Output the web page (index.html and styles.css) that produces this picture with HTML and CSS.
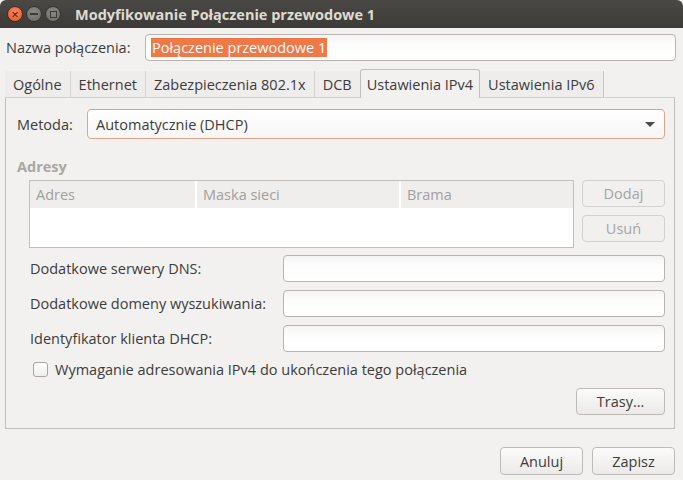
FILE: index.html
```html
<!DOCTYPE html>
<html lang="pl">
<head>
  <meta charset="UTF-8">
  <meta name="viewport" content="width=device-width, initial-scale=1.0">
  <title>Modyfikowanie Połączenie przewodowe 1</title>
  <link rel="stylesheet" href="styles.css">
</head>
<body>
  <div class="window">
    <div class="titlebar">
      <span class="wbtn close">&#215;</span>
      <span class="wbtn min"><i class="bar"></i></span>
      <span class="wbtn max"><i class="box"></i></span>
      <span class="title">Modyfikowanie Połączenie przewodowe 1</span>
    </div>

    <div class="name-row">
      <label>Nazwa połączenia:</label>
      <div class="entry name-entry"><span class="selected">Połączenie przewodowe 1</span></div>
    </div>

    <div class="tabs">
      <div class="tab">Ogólne</div>
      <div class="tab">Ethernet</div>
      <div class="tab">Zabezpieczenia 802.1x</div>
      <div class="tab">DCB</div>
      <div class="tab active">Ustawienia IPv4</div>
      <div class="tab last">Ustawienia IPv6</div>
    </div>

    <div class="page">
      <div class="method-row">
        <label>Metoda:</label>
        <div class="combo">
          <span>Automatycznie (DHCP)</span>
          <span class="arrow"></span>
        </div>
      </div>

      <div class="section-title">Adresy</div>
      <div class="addr-row">
        <div class="tree">
          <div class="tree-head">
            <div class="col c1">Adres</div>
            <div class="col c2">Maska sieci</div>
            <div class="col c3">Brama</div>
          </div>
        </div>
        <div class="side-buttons">
          <button class="btn disabled">Dodaj</button>
          <button class="btn disabled">Usuń</button>
        </div>
      </div>

      <div class="form">
        <div class="form-row">
          <label>Dodatkowe serwery DNS:</label>
          <div class="entry"></div>
        </div>
        <div class="form-row">
          <label>Dodatkowe domeny wyszukiwania:</label>
          <div class="entry"></div>
        </div>
        <div class="form-row">
          <label>Identyfikator klienta DHCP:</label>
          <div class="entry"></div>
        </div>
      </div>

      <div class="check-row">
        <span class="checkbox"></span>
        <span>Wymaganie adresowania IPv4 do ukończenia tego połączenia</span>
      </div>

      <div class="routes-row">
        <button class="btn routes">Trasy…</button>
      </div>
    </div>

    <div class="dialog-buttons">
      <button class="btn dlg">Anuluj</button>
      <button class="btn dlg">Zapisz</button>
    </div>
  </div>
</body>
</html>
```

FILE: styles.css
```css
* {
  box-sizing: border-box;
}
body {
  margin: 0;
  background: #f2f1f0;
  font-family: "Open Sans", "Noto Sans", sans-serif;
  font-size: 14.5px;
  color: #3c3c3c;
}
.window {
  width: 683px;
  height: 480px;
  background: #f2f1f0;
  overflow: hidden;
}
.titlebar {
  height: 28px;
  display: flex;
  align-items: center;
  padding-left: 7px;
  background: linear-gradient(#4b4944, #3c3b37);
  border-radius: 6px 6px 0 0;
}
.wbtn {
  width: 16px;
  height: 16px;
  border-radius: 50%;
  margin-right: 3px;
  display: flex;
  align-items: center;
  justify-content: center;
  color: #3b1a10;
  font-size: 13px;
  line-height: 1;
}
.close {
  background: radial-gradient(circle at 50% 35%, #f8875d, #e25a2a);
  border: 1px solid #4a2b20;
}
.min, .max {
  background: radial-gradient(circle at 50% 35%, #8a8883, #6c6b67);
  border: 1px solid #35342f;
}
.bar {
  display: block;
  width: 8px;
  height: 2px;
  background: #3b3a36;
}
.box {
  display: block;
  width: 7px;
  height: 7px;
  border: 1px solid #3b3a36;
}
.title {
  margin-left: 11px;
  color: #dfdbd2;
  font-weight: bold;
  font-size: 14.5px;
}

.name-row {
  display: flex;
  align-items: center;
  padding: 6px 7px 0 6px;
}
.name-row label {
  width: 139px;
}
.entry {
  height: 27px;
  border: 1px solid #b8b5b0;
  border-radius: 4px;
  background: linear-gradient(#f4f4f4, #fdfdfd 40%, #ffffff);
  display: flex;
  align-items: center;
  padding-left: 5px;
}
.name-entry {
  flex: 1;
}
.selected {
  background: #f07746;
  color: #ffffff;
  padding: 0 1px;
}

.tabs {
  display: flex;
  align-items: flex-end;
  margin: 8px 0 0 5px;
  height: 28px;
}
.tab {
  height: 26px;
  padding: 0 8px;
  display: flex;
  align-items: center;
  border-right: 1px solid #d6d4d1;
  background: #eeedeb;
}
.tab.active {
  height: 29px;
  margin-bottom: -1px;
  background: #f2f1f0;
  border: 1px solid #c3c0bb;
  border-bottom: none;
  border-radius: 3px 3px 0 0;
  padding: 0 6px;
  margin-left: -1px;
}
.tab.last {
  border-right: 1px solid #c9c6c1;
}

.page {
  margin: 0 8px 0 5px;
  height: 332px;
  border: 1px solid #c3c0bb;
  border-top-color: #d2cfca;
  padding: 11px 9px 0 11px;
}
.method-row {
  display: flex;
  align-items: center;
}
.method-row label {
  width: 70px;
}
.combo {
  flex: 1;
  height: 30px;
  border: 1px solid #dfa58c;
  border-radius: 4px;
  background: linear-gradient(#ffffff, #f7f6f5);
  display: flex;
  align-items: center;
  justify-content: space-between;
  padding: 0 9px 0 8px;
}
.arrow {
  width: 0;
  height: 0;
  border-left: 5px solid transparent;
  border-right: 5px solid transparent;
  border-top: 5px solid #4c4c4c;
}

.section-title {
  margin-top: 18px;
  font-weight: bold;
  color: #a9a7a3;
}
.addr-row {
  display: flex;
  margin-top: 4px;
  padding-left: 12px;
}
.tree {
  width: 545px;
  height: 68px;
  border: 1px solid #c3c0bb;
  background: #ffffff;
}
.tree-head {
  display: flex;
  height: 27px;
  background: #efeeed;
}
.col {
  display: flex;
  align-items: center;
  padding-left: 6px;
  color: #a2a09d;
  border-right: 2px solid #ffffff;
}
.c1 { width: 167px; }
.c2 { width: 204px; }
.c3 { flex: 1; border-right: none; }
.side-buttons {
  display: flex;
  flex-direction: column;
  gap: 8px;
  margin-left: 8px;
}
.btn {
  font: inherit;
  color: #3c3c3c;
  height: 27px;
  border: 1px solid #bebbb6;
  border-radius: 4px;
  background: linear-gradient(#fbfbfa, #ebeae8);
  padding: 0;
}
.btn.disabled {
  width: 83px;
  color: #a6a49f;
  border-color: #d3d1cd;
  background: #f1f0ef;
}

.form {
  margin-top: 7px;
  padding-left: 13px;
  display: flex;
  flex-direction: column;
  gap: 8px;
}
.form-row {
  display: flex;
  align-items: center;
}
.form-row label {
  width: 253px;
}
.form-row .entry {
  flex: 1;
}

.check-row {
  display: flex;
  align-items: center;
  margin-top: 8px;
  padding-left: 16px;
  gap: 7px;
}
.checkbox {
  width: 15px;
  height: 15px;
  border: 1px solid #a9a6a1;
  border-radius: 3px;
  background: linear-gradient(#ffffff, #efeeec);
}
.routes-row {
  display: flex;
  justify-content: flex-end;
  margin-top: 9px;
}
.btn.routes {
  width: 89px;
}

.dialog-buttons {
  display: flex;
  justify-content: flex-end;
  gap: 9px;
  padding: 18px 8px 0 0;
}
.btn.dlg {
  width: 83px;
  height: 28px;
}
```
